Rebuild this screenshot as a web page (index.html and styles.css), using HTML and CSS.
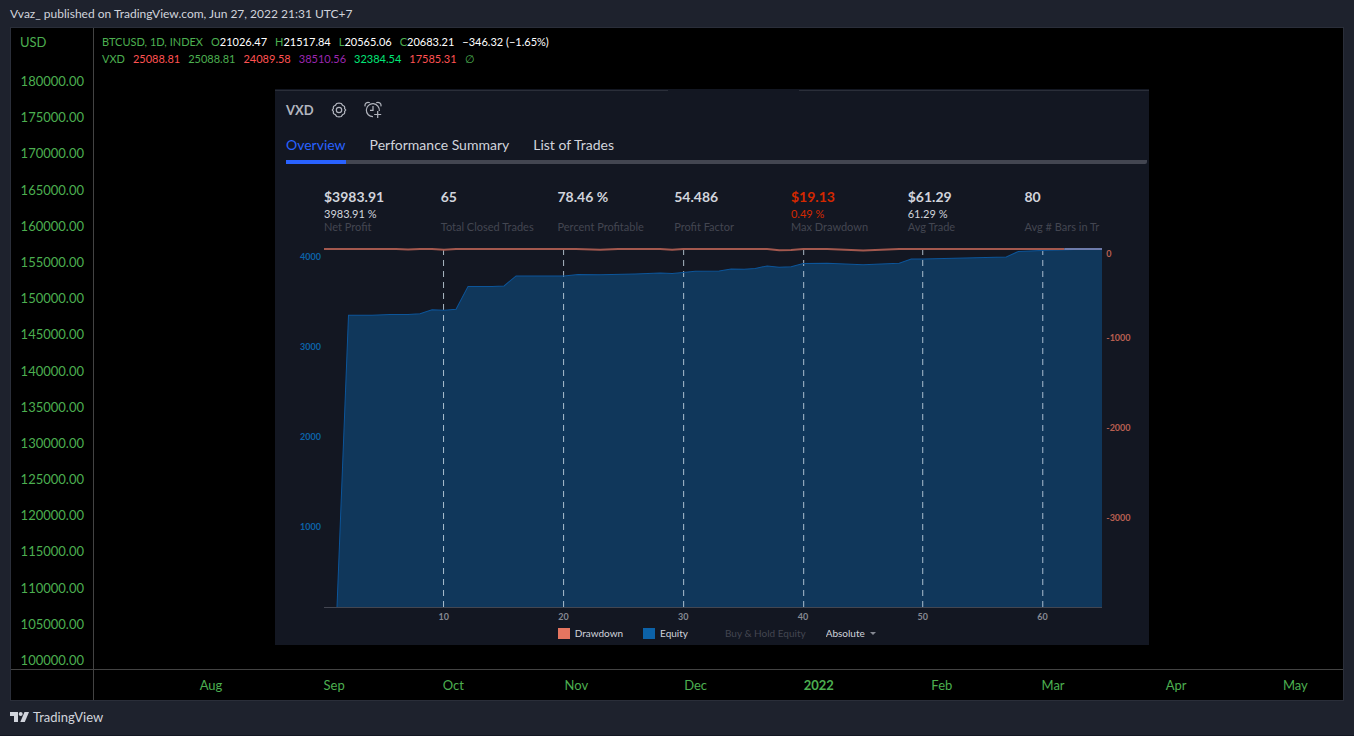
FILE: index.html
```html
<!DOCTYPE html>
<html lang="en">
<head>
    <meta charset="UTF-8">
    <meta name="viewport" content="width=device-width, initial-scale=1.0">
    <title>BTCUSD - TradingView</title>
    <link rel="stylesheet" href="styles.css">
</head>
<body>
    <header class="published">Vvaz_ published on TradingView.com, Jun 27, 2022 21:31 UTC+7</header>

    <main class="chart">
        <div class="price-axis">
            <div class="currency">USD</div>
            <ul class="prices">
                <li>180000.00</li>
                <li>175000.00</li>
                <li>170000.00</li>
                <li>165000.00</li>
                <li>160000.00</li>
                <li>155000.00</li>
                <li>150000.00</li>
                <li>145000.00</li>
                <li>140000.00</li>
                <li>135000.00</li>
                <li>130000.00</li>
                <li>125000.00</li>
                <li>120000.00</li>
                <li>115000.00</li>
                <li>110000.00</li>
                <li>105000.00</li>
                <li>100000.00</li>
            </ul>
        </div>

        <div class="pane">
            <div class="legend">
                <div class="legend-row">
                    <span>BTCUSD, 1D, INDEX</span>
                    <span>O<b>21026.47</b></span>
                    <span>H<b>21517.84</b></span>
                    <span>L<b>20565.06</b></span>
                    <span>C<b>20683.21</b></span>
                    <b>−346.32 (−1.65%)</b>
                </div>
                <div class="legend-row">
                    <span>VXD</span>
                    <span class="red">25088.81</span>
                    <span>25088.81</span>
                    <span class="red">24089.58</span>
                    <span class="purple">38510.56</span>
                    <span class="lime">32384.54</span>
                    <span class="red">17585.31</span>
                    <span>∅</span>
                </div>
            </div>

            <section class="tester">
                <div class="tester-head">
                    <h1>VXD</h1>
                    <button class="icon-button" aria-label="Settings">
                        <svg width="16" height="16" viewBox="0 0 16 16">
                            <path d="M5.700 1.500Q8 .7 10.300 1.500L11.500 3.200 13.400 4.300Q13.900 5.600 13.600 6.600L14.700 8 13.600 9.400Q13.900 10.400 13.400 11.700L11.500 12.800 10.300 14.500Q8 15.300 5.700 14.500L4.500 12.800 2.600 11.700Q2.100 10.400 2.400 9.400L1.300 8 2.400 6.600Q2.100 5.600 2.600 4.300L4.500 3.200z"/>
                            <circle cx="8" cy="8" r="2.700"/>
                        </svg>
                    </button>
                    <button class="icon-button" aria-label="Add alert">
                        <svg width="18" height="18" viewBox="0 0 18 18">
                            <path d="M15.300 10A6.500 6.500 0 1 0 9 15.700"/>
                            <path d="M1.200 5.400C.2 2.700 3.200.4 5.800 1.800M12.200 1.800c2.600-1.400 5.600.9 4.600 3.600M9 5v4.400H6M13.700 10v7M10.200 13.500h7"/>
                        </svg>
                    </button>
                </div>

                <nav class="tabs">
                    <button class="tab active">Overview</button>
                    <button class="tab">Performance Summary</button>
                    <button class="tab">List of Trades</button>
                </nav>

                <dl class="stats">
                    <div><dd>$3983.91</dd><dd class="sub">3983.91 %</dd><dt>Net Profit</dt></div>
                    <div><dd>65</dd><dd class="sub"></dd><dt>Total Closed Trades</dt></div>
                    <div><dd>78.46 %</dd><dd class="sub"></dd><dt>Percent Profitable</dt></div>
                    <div><dd>54.486</dd><dd class="sub"></dd><dt>Profit Factor</dt></div>
                    <div class="negative"><dd>$19.13</dd><dd class="sub">0.49 %</dd><dt>Max Drawdown</dt></div>
                    <div><dd>$61.29</dd><dd class="sub">61.29 %</dd><dt>Avg Trade</dt></div>
                    <div><dd>80</dd><dd class="sub"></dd><dt>Avg # Bars in Tr</dt></div>
                </dl>

                <div class="graph">
                    <div class="equity-axis">
                        <span>4000</span><span>3000</span><span>2000</span><span>1000</span>
                    </div>
                    <svg class="plot" viewBox="0 0 778 360" preserveAspectRatio="none">
                        <path class="equity-fill" d="M13 360L24.500 67.500H48L66 66.600 84 66.800 96 66 108 62 120 62.300 132 61.500 144 38.500H168L180 38 192 28H240L254 26.500 276 26.800 311 26 336 25 348 25.500 359 24.500 371 23.300 395 23 407 21 420 21.300 431 20.500 443 18 455 19.300 467 18.800 479 15.500 503 15.300 539 16.800 575 15.300 587 11H599L682 9 694 3.500 718 2.500 766 1 778 1.500V360z"/>
                        <path class="grid-line" d="M119.500 1V360M239.500 1V360M359.500 1V360M479.500 1V360M598.500 1V360M718.500 1V360"/>
                        <path class="equity-line" d="M13 360L24.500 67.500H48L66 66.600 84 66.800 96 66 108 62 120 62.300 132 61.500 144 38.500H168L180 38 192 28H240L254 26.500 276 26.800 311 26 336 25 348 25.500 359 24.500 371 23.300 395 23 407 21 420 21.300 431 20.500 443 18 455 19.300 467 18.800 479 15.500 503 15.300 539 16.800 575 15.300 587 11H599L682 9 694 3.500 718 2.500 766 1 778 1.500"/>
                        <path class="drawdown-line" d="M0 1H72L84 1.500 96 1H108L120 1.700 132 1H252L276 1.700 294 1H336L348 1.700 359 1H443L455 2.300 467 2 479 1H503L539 2.500 575 1H740"/>
                        <path class="overlap-line" d="M740 1H778"/>
                    </svg>
                    <div class="drawdown-axis">
                        <span>0</span><span>-1000</span><span>-2000</span><span>-3000</span>
                    </div>
                    <div class="trade-axis">
                        <span>10</span><span>20</span><span>30</span><span>40</span><span>50</span><span>60</span>
                    </div>
                </div>

                <div class="series">
                    <button class="serie drawdown">Drawdown</button>
                    <button class="serie equity">Equity</button>
                    <button class="serie off">Buy &amp; Hold Equity</button>
                    <label class="mode">
                        <select aria-label="Scale">
                            <option>Absolute</option>
                        </select>
                        <svg width="6" height="3" viewBox="0 0 6 3"><path d="M0 0h6L3 3z"/></svg>
                    </label>
                </div>
            </section>
        </div>

        <div class="corner"></div>
        <div class="time-axis">
            <span>Aug</span>
            <span>Sep</span>
            <span>Oct</span>
            <span>Nov</span>
            <span>Dec</span>
            <span class="year">2022</span>
            <span>Feb</span>
            <span>Mar</span>
            <span>Apr</span>
            <span>May</span>
        </div>
    </main>

    <footer class="footer">
        <a href="#">
            <svg width="19" height="10" viewBox="0 0 19 10">
                <path d="M0 0h8v10H4V4H0z"/>
                <circle cx="10.700" cy="2" r="2"/>
                <path d="M14.500 0H19l-4.200 10h-4.500z"/>
            </svg>
            TradingView
        </a>
    </footer>
</body>
</html>
```
FILE: styles.css
```css
* {
    box-sizing: border-box;
}

body {
    margin: 0;
    min-height: 100vh;
    display: flex;
    flex-direction: column;
    background-color: #1e222d;
    color: #d1d4dc;
    font-family: "Trebuchet MS", Lato, sans-serif;
    font-size: 13px;
    border-bottom: 1px solid #131722;
}

button, select {
    font: inherit;
    color: inherit;
    background: none;
    border: 0;
    padding: 0;
}

.published {
    padding: 6px 10px 5px;
    font-size: 12px;
    line-height: 16px;
}

/* chart frame: price axis on the left, time axis below */
.chart {
    flex: 1;
    margin: 0 10px;
    display: grid;
    grid-template-columns: 83px 1fr;
    grid-template-rows: 1fr 31px;
    background-color: #000;
    border: 1px solid #2a2e39;
    color: #4caf50;
}

.price-axis {
    display: flex;
    flex-direction: column;
    border-right: 1px solid #434343;
}

.currency {
    padding: 5px 9px;
    line-height: 18px;
}

.prices {
    flex: 1;
    display: flex;
    flex-direction: column;
    justify-content: space-between;
    margin: 0;
    padding: 16px 9px 0 0;
    list-style: none;
    text-align: right;
    line-height: 18px;
}

.pane {
    display: flex;
    flex-direction: column;
    padding-bottom: 24px;
}

.legend {
    padding: 5px 8px 22px;
    font-size: 11px;
    line-height: 17px;
}

.legend-row {
    display: flex;
    gap: 8px;
}

.legend b {
    font-weight: normal;
    color: #fff;
}

.red { color: #ff5252; }
.purple { color: #9c27b0; }
.lime { color: #00e676; }

.corner {
    border-top: 1px solid #434343;
    border-right: 1px solid #434343;
}

/* columns follow the number of days in each month */
.time-axis {
    display: grid;
    grid-template-columns: 31fr 30fr 31fr 30fr 31fr 31fr 28fr 31fr 30fr 12fr;
    padding-left: 117px;
    border-top: 1px solid #434343;
    line-height: 30px;
}

.time-axis span {
    width: 0;
    display: flex;
    justify-content: center;
}

.year {
    font-weight: bold;
}

/* strategy tester panel */
.tester {
    flex: 1;
    width: 70%;
    margin-left: 181px;
    padding: 11px 2px 4px 11px;
    display: flex;
    flex-direction: column;
    background: linear-gradient(90deg, #2a2e39 45%, #131722 45% 60%, #2a2e39 60%) 0 1px / 100% 1px no-repeat #131722;
    color: #d1d4dc;
}

.tester-head {
    display: flex;
    align-items: center;
    gap: 17px;
    height: 20px;
}

.tester-head h1 {
    margin: 0;
    font-size: 13px;
    color: #b2b5be;
}

.icon-button {
    display: flex;
}

.icon-button svg {
    fill: none;
    stroke: #b2b5be;
    stroke-width: 1.2;
}

.tabs {
    display: flex;
    gap: 24px;
    margin-top: 13px;
    border-bottom: 4px solid #434651;
    border-radius: 2px;
    font-size: 14px;
    line-height: 24px;
}

.tab {
    padding-bottom: 3px;
    margin-bottom: -4px;
    border-bottom: 4px solid transparent;
}

.tab.active {
    color: #2962ff;
    border-color: #2962ff;
}

.stats {
    display: grid;
    grid-template-columns: repeat(6, 117fr) 78fr;
    margin: 23px 45px 0 38px;
    white-space: nowrap;
}

.stats div {
    min-width: 0;
}

.stats dd {
    margin: 0;
    font-size: 14px;
    font-weight: bold;
    line-height: 20px;
}

.stats .sub {
    height: 13px;
    font-size: 11px;
    font-weight: normal;
    line-height: 13px;
}

.stats dt {
    font-size: 11px;
    line-height: 14px;
    color: #434651;
}

.negative dd {
    color: #d32800;
}

.graph {
    flex: 1;
    display: grid;
    grid-template-columns: 38px 1fr 45px;
    grid-template-rows: 1fr 18px;
    margin-top: 14px;
    font-size: 9px;
    font-weight: bold;
}

/* height 0 keeps the drawing from stretching its row */
.plot {
    width: 100%;
    height: 0;
    min-height: 100%;
    border-bottom: 1px solid #434651;
}

.plot path {
    fill: none;
    vector-effect: non-scaling-stroke;
}

.plot .equity-fill { fill: #10375b; }
.plot .equity-line { stroke: #0c559a; }
.plot .drawdown-line { stroke: #a3584e; stroke-width: 2; }
.plot .overlap-line { stroke: #6d7bab; stroke-width: 2; }
.plot .grid-line { stroke: #d1e0ec; stroke-opacity: .8; stroke-dasharray: 6 5; }

.equity-axis {
    display: grid;
    grid-template-rows: repeat(4, 1fr);
    padding-right: 3px;
    text-align: right;
    line-height: 18px;
    color: #0c62a8;
}

.drawdown-axis {
    display: grid;
    grid-template-rows: 1fr 2fr 2fr 2fr 1fr;
    align-items: center;
    padding-left: 4px;
    line-height: 12px;
    color: #b85f51;
}

.drawdown-axis span:first-child {
    align-self: start;
}

.trade-axis {
    grid-column: 2;
    display: grid;
    grid-template-columns: repeat(6, 10fr) 5fr;
    line-height: 18px;
    color: #868993;
}

.trade-axis span {
    width: 0;
    justify-self: end;
    display: flex;
    justify-content: center;
}

.series {
    display: flex;
    justify-content: center;
    gap: 20px;
    font-size: 10px;
    line-height: 15px;
}

.serie {
    display: flex;
    align-items: center;
    gap: 5px;
}

.serie.drawdown::before,
.serie.equity::before {
    content: "";
    width: 12px;
    height: 11px;
    background-color: #e57560;
}

.serie.equity::before {
    background-color: #0c62a8;
}

.serie.off {
    padding-left: 17px;
    color: #434651;
}

.mode {
    display: flex;
    align-items: center;
    gap: 4px;
}

.mode select {
    appearance: none;
}

.mode svg {
    fill: #868993;
}

.footer {
    padding: 8px 10px 10px;
    line-height: 16px;
}

.footer a {
    display: inline-flex;
    align-items: center;
    gap: 4px;
    color: #d1d4dc;
    text-decoration: none;
}

.footer svg {
    fill: #d1d4dc;
}
```
